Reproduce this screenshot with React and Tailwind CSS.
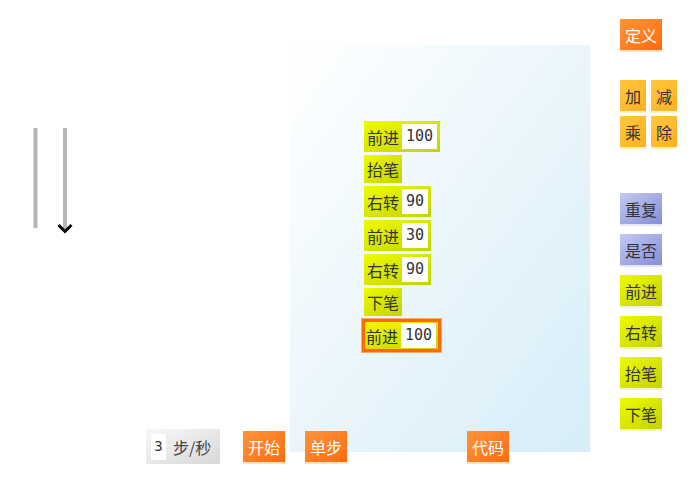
import React from "react";

const cjk = { fontFamily: '"Noto Sans CJK SC", "Noto Sans", sans-serif' };
const mono = { fontFamily: '"DejaVu Sans Mono", "Liberation Mono", monospace' };

const program = [
  { name: "前进", value: "100" },
  { name: "抬笔" },
  { name: "右转", value: "90" },
  { name: "前进", value: "30" },
  { name: "右转", value: "90" },
  { name: "下笔" },
  { name: "前进", value: "100", active: true },
];

const PaletteButton = ({ label, tone, wide = true }) => {
  const tones = {
    orange: "bg-gradient-to-br from-[#ff9438] to-[#ff6a08] text-white shadow-[0_2px_0_#ffe2c6]",
    amber: "bg-gradient-to-br from-[#ffc83e] to-[#ffb01e] text-[#333] shadow-[0_2px_0_#fff0c8]",
    violet: "bg-gradient-to-br from-[#c4caf0] to-[#868ed8] text-[#333] shadow-[0_2px_0_#e4e6f8]",
    lime: "bg-gradient-to-br from-[#eefb00] to-[#c4d200] text-[#333] shadow-[0_2px_0_#f0f6c8]",
  };
  return (
    <div
      className={`${tones[tone]} ${wide ? "w-[42px]" : "w-[26px]"} h-[31px] flex items-center justify-center text-[16px] leading-none`}
      style={cjk}
    >
      {label}
    </div>
  );
};

const Block = ({ name, value, active }) => (
  <div
    className={`flex items-center bg-gradient-to-br from-[#eefb00] to-[#c4d200] text-[#333] ${
      active
        ? "border-[3px] border-[#ff6a00] ring-1 ring-[#ffa860] -ml-[2px] pl-[1px] pr-[2px] py-[1px]"
        : "px-[3px] py-[3px]"
    }`}
  >
    <span className="text-[16px] leading-[22px]" style={cjk}>
      {name}
    </span>
    {value && (
      <span
        className="ml-[3px] h-[25px] px-[4px] bg-white flex items-center text-[15px] text-[#333]"
        style={mono}
      >
        {value}
      </span>
    )}
  </div>
);

const TurtleCanvas = () => (
  <svg width="290" height="452" className="block">
    <line x1="35.5" y1="128" x2="35.5" y2="228" stroke="#b6b6b6" strokeWidth="4" />
    <line x1="65" y1="128" x2="65" y2="229" stroke="#b6b6b6" strokeWidth="4" />
    <polyline points="58.5,225 65,231.5 71.5,225" fill="none" stroke="#000" strokeWidth="3" />
  </svg>
);

export default function App() {
  return (
    <div className="w-[700px] h-[482px] bg-white overflow-hidden" style={cjk}>
      <div className="flex">
        <TurtleCanvas />

        {/* script area */}
        <div className="mt-[45px] w-[300px] h-[407px] bg-gradient-to-br from-[#ffffff] to-[#d6edf8] pl-[74px] pt-[76px]">
          <div className="flex flex-col items-start gap-[3px]">
            {program.map((b, i) => (
              <Block key={i} {...b} />
            ))}
          </div>
        </div>

        {/* palette */}
        <div className="ml-[30px] pt-[19px] flex flex-col items-start">
          <PaletteButton label="定义" tone="orange" />
          <div className="mt-[30px] grid grid-cols-2 gap-[5px]">
            <PaletteButton label="加" tone="amber" wide={false} />
            <PaletteButton label="减" tone="amber" wide={false} />
            <PaletteButton label="乘" tone="amber" wide={false} />
            <PaletteButton label="除" tone="amber" wide={false} />
          </div>
          <div className="mt-[46px] flex flex-col gap-[10px]">
            <PaletteButton label="重复" tone="violet" />
            <PaletteButton label="是否" tone="violet" />
            <PaletteButton label="前进" tone="lime" />
            <PaletteButton label="右转" tone="lime" />
            <PaletteButton label="抬笔" tone="lime" />
            <PaletteButton label="下笔" tone="lime" />
          </div>
        </div>
      </div>

      {/* controls */}
      <div className="relative -mt-[23px] flex items-start pl-[146px]">
        <div className="h-[35px] w-[74px] flex items-center pl-[5px] bg-gradient-to-br from-[#f8f8f8] to-[#d8d8d8]">
          <span className="w-[15px] h-[26px] bg-white flex items-center justify-center text-[14px] text-[#333]" style={mono}>
            3
          </span>
          <span className="ml-[7px] text-[16px] text-[#444]" style={cjk}>
            步/秒
          </span>
        </div>
        <div className="ml-[23px] mt-[2px]">
          <PaletteButton label="开始" tone="orange" />
        </div>
        <div className="ml-[20px] mt-[2px]">
          <PaletteButton label="单步" tone="orange" />
        </div>
        <div className="ml-[120px] mt-[2px]">
          <PaletteButton label="代码" tone="orange" />
        </div>
      </div>
    </div>
  );
}
